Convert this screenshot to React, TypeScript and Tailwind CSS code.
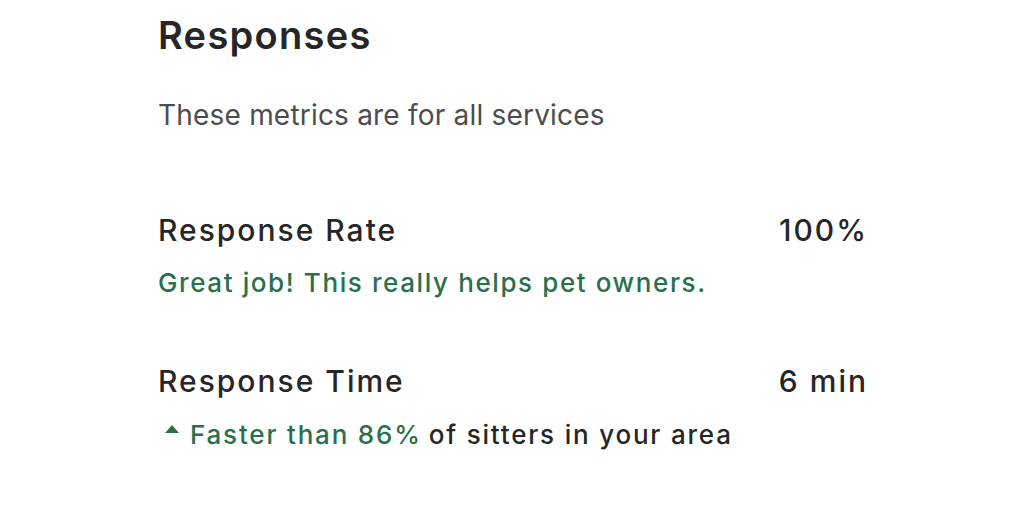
export default function App() {
  return (
    <div className="w-[1024px] h-[512px] bg-white font-['Inter',sans-serif] text-[#262626]">
      <div className="pl-[158px] w-[868px] pt-[12px]">
        <h1 className="text-[38px] leading-[46px] font-semibold tracking-[1.3px]">Responses</h1>
        <p className="mt-[40px] text-[28px] leading-[34px] text-[#4d4d4d] tracking-[0.2px]">
          These metrics are for all services
        </p>

        <div className="mt-[80px]">
          <div className="flex items-baseline justify-between text-[30px] leading-[36px] font-medium tracking-[2px]">
            <span>Response Rate</span>
            <span>100%</span>
          </div>
          <p className="mt-[19px] text-[26px] leading-[32px] font-medium text-[#2a704a] tracking-[1.6px]">
            Great job! This really helps pet owners.
          </p>
        </div>

        <div className="mt-[64px]">
          <div className="flex items-baseline justify-between text-[30px] leading-[36px] font-medium tracking-[2px]">
            <span>Response Time</span>
            <span>6 min</span>
          </div>
          <p className="mt-[20px] flex items-center text-[26px] leading-[32px] font-medium tracking-[1.8px]">
            <svg width="14" height="8" viewBox="0 0 14 8" className="ml-[7px] mr-[11px] mb-[12px]">
              <path d="M7 0 L14 8 L0 8 Z" fill="#2a704a" />
            </svg>
            <span className="text-[#2a704a]">Faster than 86%</span>
            <span className="ml-[7px]">of sitters in your area</span>
          </p>
        </div>
      </div>
    </div>
  )
}
